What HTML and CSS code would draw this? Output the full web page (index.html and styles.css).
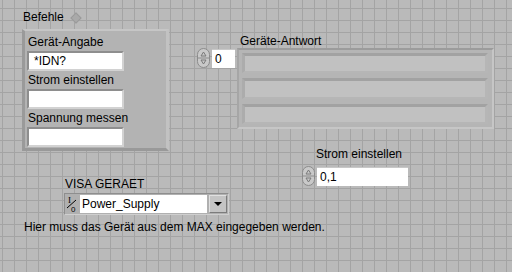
FILE: index.html
```html
<!DOCTYPE html>
<html>
  <head>
    <title>Befehle</title>
    <link rel="stylesheet" href="styles.css">
  </head>
  <body>
    <div class="panel">
      <!-- Befehle cluster -->
      <div class="label befehle-label">Befehle</div>
      <div class="terminal-dot"></div>
      <div class="cluster">
        <div class="label">Gerät-Angabe</div>
        <div class="string-box">*IDN?</div>
        <div class="label">Strom einstellen</div>
        <div class="string-box"></div>
        <div class="label">Spannung messen</div>
        <div class="string-box"></div>
      </div>

      <!-- array index + array -->
      <div class="numeric index-ctl">
        <svg class="spinner" width="13" height="20" viewBox="0 0 13 20">
          <rect x="0.5" y="0.5" width="12" height="19" rx="6" fill="#c9c9c9" stroke="#8c8c8c"/>
          <line x1="1" y1="10" x2="12" y2="10" stroke="#8c8c8c"/>
          <path d="M6.5 4 L9 8 L4 8 Z" fill="none" stroke="#7a7a7a"/>
          <path d="M6.5 16 L9 12 L4 12 Z" fill="none" stroke="#7a7a7a"/>
        </svg>
        <div class="num-field small">0</div>
      </div>
      <div class="label antwort-label">Geräte-Antwort</div>
      <div class="array">
        <div class="element"></div>
        <div class="element"></div>
        <div class="element"></div>
      </div>

      <!-- Strom einstellen numeric -->
      <div class="label strom-label">Strom einstellen</div>
      <div class="numeric strom-ctl">
        <svg class="spinner" width="13" height="20" viewBox="0 0 13 20">
          <rect x="0.5" y="0.5" width="12" height="19" rx="6" fill="#c9c9c9" stroke="#8c8c8c"/>
          <line x1="1" y1="10" x2="12" y2="10" stroke="#8c8c8c"/>
          <path d="M6.5 4 L9 8 L4 8 Z" fill="none" stroke="#7a7a7a"/>
          <path d="M6.5 16 L9 12 L4 12 Z" fill="none" stroke="#7a7a7a"/>
        </svg>
        <div class="num-field wide">0,1</div>
      </div>

      <!-- VISA resource -->
      <div class="label visa-label">VISA GERAET</div>
      <div class="visa">
        <svg class="io-icon" width="12" height="18" viewBox="0 0 12 18">
          <text x="2" y="8" font-family="Liberation Serif, serif" font-size="9" fill="#000">I</text>
          <line x1="1" y1="13" x2="10" y2="5" stroke="#000"/>
          <text x="5" y="17" font-family="Liberation Sans, sans-serif" font-size="8" fill="#000">0</text>
        </svg>
        <div class="visa-field">Power_Supply</div>
        <div class="drop-btn"><span class="tri"></span></div>
      </div>

      <div class="label note">Hier muss das Gerät aus dem MAX eingegeben werden.</div>
    </div>
  </body>
</html>
```

FILE: styles.css
```css
body {
  margin: 0;
  font-family: "Liberation Sans", Arial, sans-serif;
  font-size: 12px;
  color: #000;
}
.panel {
  position: relative;
  width: 512px;
  height: 272px;
  overflow: hidden;
  background-color: #bababa;
  background-image:
    linear-gradient(to right, #a4a4a4 1px, transparent 1px),
    linear-gradient(to bottom, #a4a4a4 1px, transparent 1px);
  background-size: 12px 12px;
  background-position: 2px 8px;
}
.label {
  line-height: 14px;
  white-space: nowrap;
}

/* free-canvas placement of front panel objects */
.befehle-label { position: absolute; left: 23px; top: 10px; }
.terminal-dot {
  position: absolute;
  left: 72px;
  top: 14px;
  width: 6px;
  height: 6px;
  background: #a9a9a9;
  border: 1px solid #9a9a9a;
  transform: rotate(45deg);
}
.cluster {
  position: absolute;
  left: 22px;
  top: 29px;
  width: 139px;
  height: 116px;
  padding: 1px 0 0 2px;
  background: #b3b3b3;
  border-top: 2px solid #c6c6c6;
  border-left: 3px solid #9a9a9a;
  border-right: 3px solid #c2c2c2;
  border-bottom: 3px solid #999;
  display: flex;
  flex-direction: column;
}
.cluster .label {
  padding-left: 1px;
  margin-top: 3px;
}
.string-box {
  width: 88px;
  height: 16px;
  margin-top: 2px;
  padding-left: 5px;
  line-height: 16px;
  background: #fff;
  border-top: 2px solid #8e8e8e;
  border-left: 2px solid #8e8e8e;
  border-right: 2px solid #d2d2d2;
  border-bottom: 2px solid #d2d2d2;
}
.string-box + .label { margin-top: 2px; }

.numeric {
  position: absolute;
  display: flex;
  align-items: center;
  gap: 2px;
}
.index-ctl { left: 197px; top: 48px; }
.strom-ctl { left: 302px; top: 166px; }
.num-field {
  height: 18px;
  line-height: 18px;
  padding-left: 3px;
  background: #fff;
  border-top: 1px solid #c8c8c8;
}
.num-field.small { width: 20px; }
.num-field.wide { width: 88px; }

.antwort-label { position: absolute; left: 240px; top: 34px; }
.array {
  position: absolute;
  left: 237px;
  top: 48px;
  width: 246px;
  height: 71px;
  padding: 3px 4px 3px 3px;
  background: #b5b5b5;
  border-top: 2px solid #9c9c9c;
  border-left: 2px solid #a6a6a6;
  border-right: 2px solid #c6c6c6;
  border-bottom: 2px solid #c6c6c6;
  display: flex;
  flex-direction: column;
  gap: 5px;
}
.element {
  flex: 1;
  background: #c1c1c1;
  border-top: 3px solid #a2a2a2;
  border-left: 3px solid #acacac;
  border-right: 3px solid #b6b6b6;
  border-bottom: 2px solid #b6b6b6;
}

.strom-label { position: absolute; left: 316px; top: 147px; }
.visa-label { position: absolute; left: 65px; top: 177px; }
.visa {
  position: absolute;
  left: 64px;
  top: 193px;
  width: 161px;
  height: 18px;
  padding: 1px;
  display: flex;
  align-items: center;
  gap: 2px;
  background: #b0b0b0;
  border-top: 1px solid #8e8e8e;
  border-left: 1px solid #8e8e8e;
  border-right: 1px solid #cfcfcf;
  border-bottom: 1px solid #cfcfcf;
}
.io-icon { flex: none; }
.visa-field {
  flex: 1;
  height: 18px;
  line-height: 18px;
  padding-left: 2px;
  background: #fff;
}
.drop-btn {
  width: 16px;
  height: 16px;
  display: flex;
  align-items: center;
  justify-content: center;
  background: #c4c4c4;
  border-top: 1px solid #e0e0e0;
  border-left: 1px solid #e0e0e0;
  border-right: 1px solid #7c7c7c;
  border-bottom: 1px solid #7c7c7c;
}
.tri {
  width: 0;
  height: 0;
  border-left: 4px solid transparent;
  border-right: 4px solid transparent;
  border-top: 4px solid #000;
}
.note { position: absolute; left: 24px; top: 220px; }
```
